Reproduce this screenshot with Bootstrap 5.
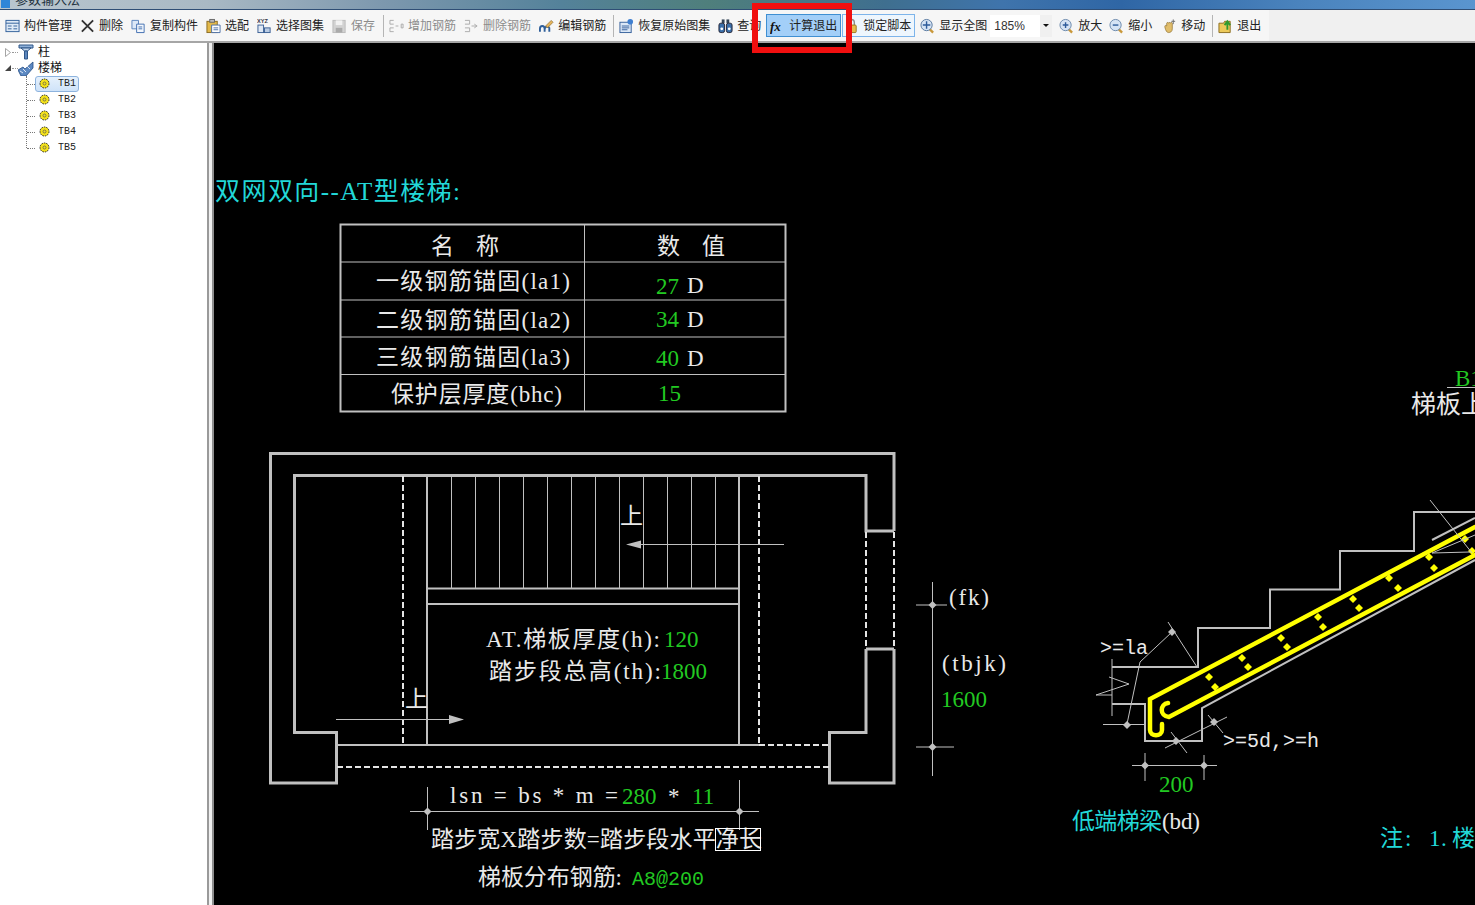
<!DOCTYPE html>
<html lang="zh-CN">
<head>
  <meta charset="UTF-8">
  <meta name="viewport" content="width=device-width, initial-scale=1">
  <title>参数输入法</title>
  <link href="https://cdn.jsdelivr.net/npm/bootstrap@5.3.0/dist/css/bootstrap.min.css" rel="stylesheet">
  <style>
    html, body { height: 100%; }
    body {
      margin: 0;
      overflow: hidden;
      background: #f0f0f0;
      font-family: "Liberation Sans", "Noto Sans CJK SC", sans-serif;
      font-size: 12px;
      color: #222;
    }
    .app-shell { width: 1475px; height: 905px; }
    /* window title, mostly cut off at the top of the shot */
    .title-strip {
      height: 10px;
      flex: none;
      border-bottom: 1px solid #2f4e75;
      background: linear-gradient(90deg, #b9c6cf 0, #a9b9c4 14%, #7d98ae 26%, #54829a 38%, #4f7f7c 48%, #3f6f8f 60%, #3f74ac 68%, #2f66a5 76%, #4a83bd 88%, #5a95cf 100%);
    }
    .title-glyph { width: 9px; height: 8px; background: #2f86d8; margin-left: 1px; }
    .title-text { font-size: 13px; line-height: 10px; margin: -5px 0 0 5px; color: #20303c; }
    /* toolbar */
    .tool-strip { height: 33px; flex: none; background: #f0f0f0; border-bottom: 2px solid #a6a6a6; }
    .tool-group { background: #f6f6f6; padding-left: 5px; height: 31px; }
    .tool-item { margin-right: 8px; white-space: nowrap; gap: 4px; }
    .tool-item svg { width: 15px; height: 16px; flex: none; }
    .tool-off { color: #8c8c8c; }
    .tool-sep { width: 1px; height: 22px; background: #b5b5b5; margin: 0 1px 0 -1px; }
    .tool-sep-a { margin: 0 1px 0 0; }
    .tool-btn { height: 23px; padding: 0 3px; border: 1px solid #7db4ea; background: #eef6fd; }
    .tool-btn-on { background: #a3cff8; border-color: #3f8fd2; margin-left: -3px; margin-right: 1px; }
    .tool-btn-lock { margin-right: 5px; }
    .tool-btn-lock svg { margin-left: -2px; }
    .tool-item-near { margin-right: 7px; }
    .tool-item-move { margin-left: 6px; }
    .zoom-combo { width: 62px; height: 22px; margin: 0 7px 0 -5px; background: linear-gradient(90deg, #fff 0, #fff 80%, #f0f0f0 80%); padding-left: 4px; font-size: 12px; color: #333; }
    .zoom-caret { width: 0; height: 0; border: 3px solid transparent; border-top: 3px solid #111; border-bottom: 0; margin-right: 3px; }
    .red-mark { position: absolute; left: 752px; top: 3px; width: 100px; height: 50px; border: 6px solid #f00f0f; pointer-events: none; }
    /* left tree */
    .work-area { min-height: 0; }
    .tree-pane { width: 214px; flex: none; background: #fff; border-right: 2px solid #8f8f8f; box-shadow: inset -3px 0 0 #f0f0f0; position: relative; padding-top: 1px; font-family: "Liberation Serif", "Noto Sans CJK SC", serif; }
    .tree-pane-edge { position: absolute; right: 3px; top: 0; bottom: 0; width: 2px; background: #9a9a9a; }
    .tree-row { height: 16px; line-height: 16px; font-size: 12px; color: #111; }
    .tree-node { width: 6px; margin: 0 1px 0 5px; flex: none; }
    .tree-node svg { display: block; }
    .tree-dots { width: 6px; border-top: 1px dotted #999; flex: none; }
    .tree-big { width: 16px; height: 16px; flex: none; margin-right: 4px; }
    .tree-kids { position: relative; margin: 0; padding: 0 0 0 26px; list-style: none; }
    .tree-kids::before { content: ""; position: absolute; left: 26px; top: 0; height: 72px; border-left: 1px dotted #777; }
    .tree-kid { height: 16px; position: relative; padding-left: 9px; font-family: "Liberation Mono", monospace; font-size: 10px; line-height: 16px; }
    .tree-kid::before { content: ""; position: absolute; left: 1px; top: 8px; width: 8px; border-top: 1px dotted #777; }
    .tree-pill { width: 44px; height: 16px; padding-left: 3px; gap: 8px; border: 1px solid transparent; border-radius: 3px; }
    .tree-pill-sel { background: linear-gradient(#e6f1fc, #cfe3f9); border-color: #8db3de; }
    .gear-mark { width: 11px; height: 11px; flex: none; margin-top: -2px; }
    /* cad canvas */
    .cad-pane { background: #000; min-width: 0; }
    .cad-pane svg { display: block; width: 1261px; height: 862px; }
    .t { font-family: "Liberation Serif", "Noto Sans CJK SC", serif; font-size: 23px; fill: #e9e9e9; }
    .t-lg { font-size: 25px; }
    .t-m { font-family: "Liberation Mono", monospace; font-size: 20px; }
    .t-g { fill: #22c922; }
    .t-c { fill: #22d8d8; }
    .ln { stroke: #c0c0c0; fill: none; }
    .w1 { stroke-width: 1; }
    .w2 { stroke-width: 2; }
    .w3 { stroke-width: 3; }
    .dash { stroke: #e4e4e4; stroke-width: 2; stroke-dasharray: 6 3; fill: none; }
    .rebar { stroke: #ffff00; stroke-width: 4.500; fill: none; stroke-linecap: round; }
    .dot { fill: #c0c0c0; }
    .tie { fill: #ffff00; }
  </style>
</head>
<body>
  <div class="app-shell d-flex flex-column position-relative">
    <div class="title-strip d-flex overflow-hidden">
      <div class="title-glyph"></div>
      <div class="title-text">参数输入法</div>
    </div>

    <div class="tool-strip d-flex">
      <div class="tool-group d-flex align-items-center">
        <div class="tool-item d-flex align-items-center"><svg viewBox="0 0 16 16"><rect x="1" y="2" width="14" height="12" fill="#dfeaf6" stroke="#2f5f9a"/><path d="M1 5h14M3 8h4M3 11h4M9 8h4M9 11h4" stroke="#2f5f9a"/></svg><span>构件管理</span></div>
        <div class="tool-item d-flex align-items-center"><svg viewBox="0 0 16 16"><path d="M2 2l12 12M14 2L2 14" stroke="#333" stroke-width="2"/></svg><span>删除</span></div>
        <div class="tool-item d-flex align-items-center"><svg viewBox="0 0 16 16"><path d="M1 2h7v9H1z" fill="#dce8f7" stroke="#5a84bd"/><path d="M6 6h8v9H6z" fill="#f4f8fd" stroke="#3f6db0"/><path d="M8 9h4M8 11h4" stroke="#3f6db0"/></svg><span>复制构件</span></div>
        <div class="tool-item d-flex align-items-center"><svg viewBox="0 0 16 16"><rect x="1" y="3" width="11" height="12" fill="#e3b94a" stroke="#8a6a20"/><rect x="4" y="1" width="5" height="3" fill="#bbb" stroke="#666"/><path d="M6 7h9v8H6z" fill="#fff" stroke="#4a6ea5"/><path d="M8 10h5M8 12h5" stroke="#4a6ea5"/></svg><span>选配</span></div>
        <div class="tool-item d-flex align-items-center"><svg viewBox="0 0 16 16"><text x="0" y="5" font-size="6" font-family="Liberation Sans" font-weight="700" fill="#334">XYZ</text><rect x="1" y="7" width="6" height="8" fill="#dfe8f4" stroke="#3a5f94"/><rect x="8" y="10" width="6" height="5" fill="#b9cbe3" stroke="#3a5f94"/></svg><span>选择图集</span></div>
        <div class="tool-item tool-off d-flex align-items-center"><svg viewBox="0 0 16 16"><rect x="1" y="2" width="13" height="13" fill="#d2d2d2" stroke="#bbb"/><rect x="4" y="2" width="7" height="5" fill="#f2f2f2"/><rect x="4" y="10" width="7" height="5" fill="#aaa"/></svg><span>保存</span></div>
        <div class="tool-sep tool-sep-a"></div>
        <div class="tool-item tool-off d-flex align-items-center ms-1"><svg viewBox="0 0 16 16"><path d="M5 2H1v4h4M5 10H1v4h4M7 8h3M13 6v4h2V6z" fill="none" stroke="#aaa"/></svg><span>增加钢筋</span></div>
        <div class="tool-item tool-off d-flex align-items-center"><svg viewBox="0 0 16 16"><path d="M1 2h5v4H1M1 10h5v4H1M8 8h5M11 6l3 2-3 2" fill="none" stroke="#aaa"/></svg><span>删除钢筋</span></div>
        <div class="tool-item d-flex align-items-center"><svg viewBox="0 0 16 16"><path d="M1 14v-3c0-4 5-4 5 0v3M6 12c0-4 4-4 5-2v4" fill="none" stroke="#2f5f9a" stroke-width="2"/><path d="M7 8l6-6 2 2-6 6z" fill="#e5b45a" stroke="#7a5a20" stroke-width=".6"/></svg><span>编辑钢筋</span></div>
        <div class="tool-sep"></div>
        <div class="tool-item d-flex align-items-center ms-1"><svg viewBox="0 0 16 16"><rect x="1" y="4" width="12" height="11" fill="#dbe8f7" stroke="#345f9a"/><path d="M3 8h8M3 10h8M3 12h6" stroke="#345f9a"/><circle cx="12" cy="3.500" r="3" fill="#3f7fd0"/></svg><span>恢复原始图集</span></div>
        <div class="tool-item d-flex align-items-center"><svg viewBox="0 0 16 16"><rect x="4" y="1" width="3" height="4" fill="#345"/><rect x="9" y="1" width="3" height="4" fill="#345"/><rect x="1" y="5" width="6" height="10" rx="2" fill="#3a6ea8" stroke="#223"/><rect x="9" y="5" width="6" height="10" rx="2" fill="#3a6ea8" stroke="#223"/><circle cx="4" cy="11" r="1.500" fill="#fff"/><circle cx="12" cy="11" r="1.500" fill="#fff"/></svg><span>查询</span></div>
        <div class="tool-item tool-btn tool-btn-on d-flex align-items-center"><svg viewBox="0 0 16 16"><text x="0" y="13" font-size="14" font-family="Liberation Serif" font-style="italic" font-weight="700" fill="#111">fx</text></svg><span>计算退出</span></div>
        <div class="tool-item tool-btn tool-btn-lock d-flex align-items-center"><svg viewBox="0 0 16 16"><path d="M5 7V4a3 3 0 0 1 6 0v3" fill="none" stroke="#8d8d8d" stroke-width="1.500"/><rect x="3" y="7" width="10" height="8" rx="1" fill="#e8bb4c" stroke="#99761e"/></svg><span>锁定脚本</span></div>
        <div class="tool-item d-flex align-items-center"><svg viewBox="0 0 16 16"><path d="M10 11l4 4" stroke="#c9983a" stroke-width="2.500"/><circle cx="7" cy="7" r="6" fill="#d5e3f4" stroke="#56779f"/><path d="M7 3v8M3 7h8" stroke="#2d5b9a" stroke-width="1.500"/></svg><span>显示全图</span></div>
        <div class="zoom-combo d-flex align-items-center justify-content-between"><span>185%</span><span class="zoom-caret"></span></div>
        <div class="tool-item tool-item-near d-flex align-items-center"><svg viewBox="0 0 16 16"><path d="M10 11l4 4" stroke="#c9983a" stroke-width="2.500"/><circle cx="7" cy="7" r="6" fill="#d5e3f4" stroke="#6a87ab"/><path d="M7 4v6M4 7h6" stroke="#2d5b9a" stroke-width="1.500"/></svg><span>放大</span></div>
        <div class="tool-item d-flex align-items-center me-1"><svg viewBox="0 0 16 16"><path d="M10 11l4 4" stroke="#c9983a" stroke-width="2.500"/><circle cx="7" cy="7" r="6" fill="#d5e3f4" stroke="#6a87ab"/><path d="M4 7h6" stroke="#2d5b9a" stroke-width="1.500"/></svg><span>缩小</span></div>
        <div class="tool-item tool-item-move d-flex align-items-center"><svg viewBox="0 0 16 16"><path d="M3 9c0-2 1-2 2-1V5c0-1 2-1 2 0 0-1 2-1 2 0 0-1 2-1 2 0v6c0 3-2 4-4 4s-3-2-4-6z" fill="#e1bd6a" stroke="#8b6c2a" stroke-width=".7"/><path d="M12 1v5M10 3h4" stroke="#6b6b6b"/></svg><span>移动</span></div>
        <div class="tool-sep"></div>
        <div class="tool-item d-flex align-items-center ms-1 me-2"><svg viewBox="0 0 16 16"><path d="M1 5h5l1-2h6v12H1z" fill="#ecc95a" stroke="#8b6c1e"/><path d="M10 12V5M7 7l3-4 3 4" fill="none" stroke="#2f9a2f" stroke-width="2"/></svg><span>退出</span></div>
      </div>
    </div>

    <div class="work-area d-flex flex-grow-1">
      <div class="tree-pane">
        <div class="tree-row d-flex align-items-center">
          <span class="tree-node"><svg width="6" height="9" viewBox="0 0 6 9"><path d="M.5.5l5 4-5 4z" fill="#fff" stroke="#a5a5a5"/></svg></span>
          <span class="tree-dots"></span>
          <svg class="tree-big" viewBox="0 0 16 16"><path d="M1 1h14v3H1z" fill="#8fb0d8" stroke="#2f5688"/><path d="M3 4h10L9.500 7H6.500z" fill="#c6d8ee" stroke="#2f5688"/><path d="M6.500 7h3v8h-3z" fill="#5c86bd" stroke="#2f5688"/></svg>
          <span>柱</span>
        </div>
        <div class="tree-row d-flex align-items-center">
          <span class="tree-node"><svg width="6" height="6" viewBox="0 0 6 6"><path d="M6 0v6H0z" fill="#444"/></svg></span>
          <span class="tree-dots"></span>
          <svg class="tree-big" viewBox="0 0 16 16"><path d="M0 10l5-3 2 2 8-7v6l-7 8H3z" fill="#5d89c2" stroke="#264e85" stroke-width=".8"/><path d="M2 11l3 2M5 9l3 3M9 6l3 3" stroke="#dbe7f6"/></svg>
          <span>楼梯</span>
        </div>
        <ul class="tree-kids">
          <li class="tree-kid"><div class="tree-pill tree-pill-sel d-flex align-items-center"><svg class="gear-mark" viewBox="0 0 11 11"><circle cx="5.500" cy="5.500" r="4.500" fill="#f4e21a" stroke="#222" stroke-dasharray="1.500 1"/><circle cx="5.500" cy="5.500" r="1.500" fill="#f4e21a" stroke="#555" stroke-width=".7"/></svg><span>TB1</span></div></li>
          <li class="tree-kid"><div class="tree-pill d-flex align-items-center"><svg class="gear-mark" viewBox="0 0 11 11"><circle cx="5.500" cy="5.500" r="4.500" fill="#f4e21a" stroke="#222" stroke-dasharray="1.500 1"/><circle cx="5.500" cy="5.500" r="1.500" fill="#f4e21a" stroke="#555" stroke-width=".7"/></svg><span>TB2</span></div></li>
          <li class="tree-kid"><div class="tree-pill d-flex align-items-center"><svg class="gear-mark" viewBox="0 0 11 11"><circle cx="5.500" cy="5.500" r="4.500" fill="#f4e21a" stroke="#222" stroke-dasharray="1.500 1"/><circle cx="5.500" cy="5.500" r="1.500" fill="#f4e21a" stroke="#555" stroke-width=".7"/></svg><span>TB3</span></div></li>
          <li class="tree-kid"><div class="tree-pill d-flex align-items-center"><svg class="gear-mark" viewBox="0 0 11 11"><circle cx="5.500" cy="5.500" r="4.500" fill="#f4e21a" stroke="#222" stroke-dasharray="1.500 1"/><circle cx="5.500" cy="5.500" r="1.500" fill="#f4e21a" stroke="#555" stroke-width=".7"/></svg><span>TB4</span></div></li>
          <li class="tree-kid"><div class="tree-pill d-flex align-items-center"><svg class="gear-mark" viewBox="0 0 11 11"><circle cx="5.500" cy="5.500" r="4.500" fill="#f4e21a" stroke="#222" stroke-dasharray="1.500 1"/><circle cx="5.500" cy="5.500" r="1.500" fill="#f4e21a" stroke="#555" stroke-width=".7"/></svg><span>TB5</span></div></li>
        </ul>
        <div class="tree-pane-edge"></div>
      </div>

      <div class="cad-pane flex-grow-1 overflow-hidden">
        <!-- drawing uses screenshot coordinates -->
        <svg viewBox="214 43 1261 862">
          <defs>
            <path id="dm" d="M0-4L4 0 0 4-4 0z"/>
            <path id="tieMark" d="M0-4L4 0 0 4-4 0z"/>
          </defs>

          <text class="t t-lg t-c" x="215" y="200" textLength="245">双网双向--AT型楼梯:</text>

          <!-- value table -->
          <g class="ln w2">
            <rect x="340.500" y="224.500" width="445" height="187"/>
            <path class="w1" d="M340 262h445M340 300h445M340 337h445M340 374.500h445M584.500 224v187"/>
          </g>
          <text class="t" x="431" y="254">名</text><text class="t" x="476" y="254">称</text>
          <text class="t" x="657" y="254">数</text><text class="t" x="702" y="254">值</text>
          <text class="t" x="376" y="289" textLength="194">一级钢筋锚固(la1)</text>
          <text class="t" x="376" y="328" textLength="194">二级钢筋锚固(la2)</text>
          <text class="t" x="376" y="365" textLength="194">三级钢筋锚固(la3)</text>
          <text class="t" x="391" y="402" textLength="171">保护层厚度(bhc)</text>
          <text class="t t-g" x="656" y="294">27</text><text class="t" x="687" y="293">D</text>
          <text class="t t-g" x="656" y="327">34</text><text class="t" x="687" y="327">D</text>
          <text class="t t-g" x="656" y="366">40</text><text class="t" x="687" y="366">D</text>
          <text class="t t-g" x="658" y="401">15</text>

          <!-- stair plan -->
          <path class="ln w3" d="M894 531V453.500H270.500V783H336.500V732.500H294.500V475.500H866V531H894"/>
          <path class="ln w3" d="M866 649H894M866 649V732.500H829.500V783H894V649"/>
          <path class="dash" d="M866 532V648M894 532V648M403 476V745M759 476V745M759 745H829M337 767H829"/>
          <path class="ln w2" d="M427 476V745M739 476V745M336 745H759M427 588.500H739M427 604H739"/>
          <path class="ln w1" d="M451.500 476V588M475.500 476V588M499.500 476V588M523.500 476V588M547.500 476V588M571.500 476V588M595.500 476V588M619.500 476V588M643.500 476V588M667.500 476V588M691.500 476V588M715.500 476V588"/>
          <path class="ln w1" d="M784 544.500H640M336 719.500H450"/>
          <path class="dot" d="M626 544.500l15-4v8zM464 719.500l-15-4.500v9z"/>
          <text class="t" x="620" y="524">上</text>
          <text class="t" x="405" y="707">上</text>
          <text class="t" x="486" y="647" textLength="174">AT.梯板厚度(h):</text>
          <text class="t t-g" x="664" y="647">120</text>
          <text class="t" x="489" y="679" textLength="172">踏步段总高(th):</text>
          <text class="t t-g" x="661" y="679">1800</text>

          <!-- right dims -->
          <path class="ln w1" d="M932.500 582V776M916 605H947M916 747H954"/>
          <use href="#dm" class="dot" x="932.500" y="605"/><use href="#dm" class="dot" x="932.500" y="747"/>
          <text class="t" x="949" y="605" textLength="40">(fk)</text>
          <text class="t" x="942" y="671" textLength="64">(tbjk)</text>
          <text class="t t-g" x="941" y="707">1600</text>

          <!-- bottom dims -->
          <path class="ln w1" d="M410 811.500H759M427.500 787V830M739.500 780V830"/>
          <use href="#dm" class="dot" x="427.500" y="811.500"/><use href="#dm" class="dot" x="739.500" y="811.500"/>
          <text class="t" x="450" y="803" textLength="168">lsn = bs * m =</text>
          <text class="t t-g" x="622" y="804">280</text>
          <text class="t" x="668" y="804">*</text>
          <text class="t t-g" x="692" y="804">11</text>
          <text class="t" x="431" y="847" textLength="331">踏步宽X踏步数=踏步段水平净长</text>
          <rect x="715.500" y="828.500" width="45" height="22" fill="none" stroke="#fff"/>
          <text class="t" x="478" y="885" textLength="144">梯板分布钢筋:</text>
          <text class="t t-m t-g" x="632" y="885">A8@200</text>

          <!-- stair section -->
          <path class="ln w2" d="M1112 667H1198V628H1270V589.500H1340V551H1414V512H1475"/>
          <path class="ln w2" d="M1112 704H1145V741H1202V708L1475 560"/>
          <path class="rebar" d="M1162 724V730C1162 737 1150 737 1150 730V699L1475 527"/>
          <path class="rebar" d="M1168 703C1160 704 1159 716 1169 717L1475 555"/>
          <g class="tie">
            <use href="#tieMark" x="1209" y="677"/><use href="#tieMark" x="1242" y="658"/><use href="#tieMark" x="1281" y="638"/><use href="#tieMark" x="1318" y="617"/><use href="#tieMark" x="1353" y="599"/><use href="#tieMark" x="1389" y="578"/><use href="#tieMark" x="1429" y="557"/><use href="#tieMark" x="1465" y="539"/>
            <use href="#tieMark" x="1215" y="687"/><use href="#tieMark" x="1248" y="667"/><use href="#tieMark" x="1287" y="647"/><use href="#tieMark" x="1323" y="627"/><use href="#tieMark" x="1359" y="608"/><use href="#tieMark" x="1398" y="588"/><use href="#tieMark" x="1434" y="568"/><use href="#tieMark" x="1472" y="551"/>
          </g>
          <path class="ln w1" d="M1168 622L1197 667M1172 632L1140 662L1127 724M1103 724.500H1145M1112 659V716M1109 677L1129 684L1096 695H1112"/>
          <path class="ln w1" d="M1165 748L1227 717M1171 732L1187 753M1208 715L1223 733M1132 765.500H1217M1145 753V781M1204 755V780M1430 500L1472 553M1432 553L1475 535M1432 553L1470 552"/>
          <path class="ln w2" d="M1432 540L1475 518"/>
          <use href="#dm" class="dot" x="1172" y="632"/><use href="#dm" class="dot" x="1127" y="725"/><use href="#dm" class="dot" x="1176" y="741"/><use href="#dm" class="dot" x="1214" y="722"/><use href="#dm" class="dot" x="1145" y="765.500"/><use href="#dm" class="dot" x="1204" y="765.500"/>
          <text class="t t-m" x="1100" y="654">&gt;=la</text>
          <text class="t t-m" x="1223" y="747">&gt;=5d,&gt;=h</text>
          <text class="t t-g" x="1159" y="792">200</text>
          <text class="t t-c" x="1072" y="829" textLength="90">低端梯梁</text>
          <text class="t" x="1162" y="829" textLength="38">(bd)</text>
          <text class="t t-c" x="1380 1405 1417 1429 1441 1452" y="846">注: 1.楼</text>
          <text class="t t-g" x="1455" y="386">B1</text>
          <path d="M1447 387.500H1475" stroke="#c0c0c0"/>
          <text class="t t-lg" x="1411" y="413">梯板上</text>
        </svg>
      </div>
    </div>

    <div class="red-mark"></div>
  </div>
  <script src="https://cdn.jsdelivr.net/npm/bootstrap@5.3.0/dist/js/bootstrap.bundle.min.js"></script>
</body>
</html>
